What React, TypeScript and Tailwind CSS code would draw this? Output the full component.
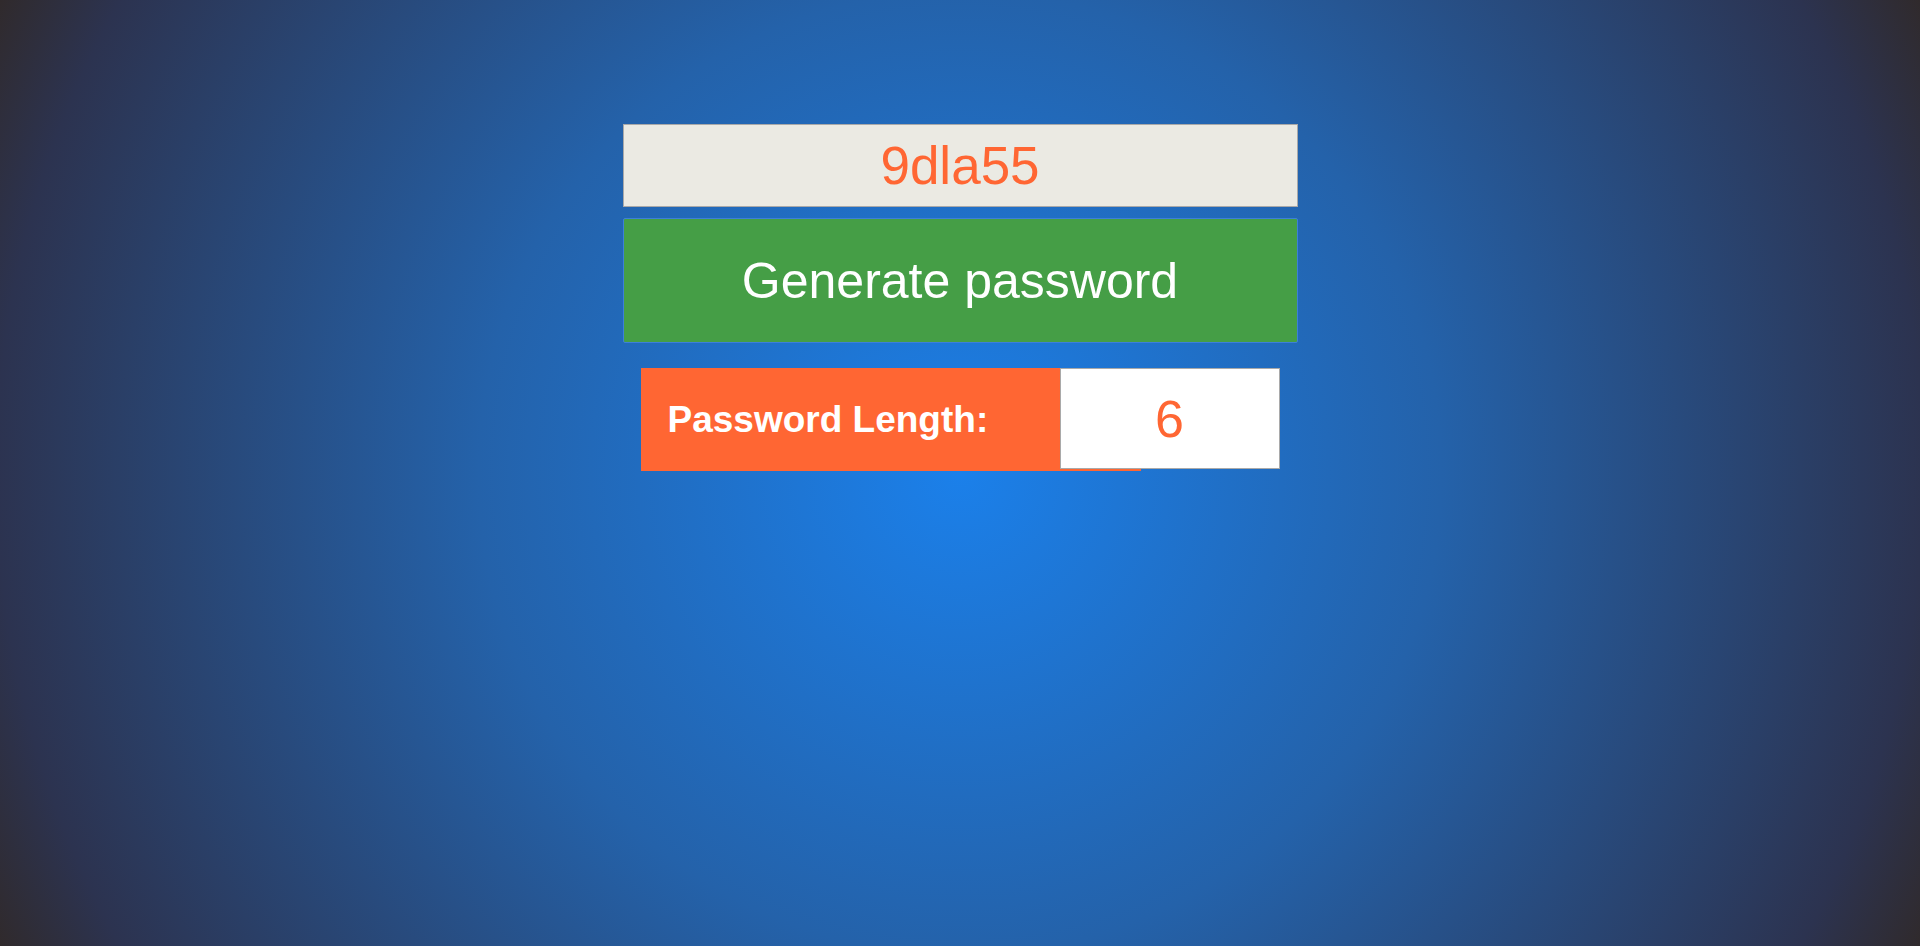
import React, { useState } from 'react';

const chars = 'abcdefghijklmnopqrstuvwxyz0123456789';

const App: React.FC = () => {
  const [length, setLength] = useState(6);
  const [password, setPassword] = useState('9dla55');

  const generate = () => {
    let out = '';
    for (let i = 0; i < length; i++) {
      out += chars[Math.floor(Math.random() * chars.length)];
    }
    setPassword(out);
  };

  return (
    <div
      className="min-h-screen w-full flex flex-col items-center pt-[124px] bg-[radial-gradient(circle,#1b80ea_0%,#2462aa_45%,#2c3350_90%,#302a2c_100%)]"
      style={{ fontFamily: '"Liberation Sans", Arial, sans-serif' }}
    >
      <div className="w-[675px] h-[83px] bg-[#ebeae3] border border-[#a9a9a9] flex items-center justify-center text-[#ff6633] text-[53px] leading-none">
        {password}
      </div>

      <button
        onClick={generate}
        className="mt-[11px] w-[675px] h-[125px] bg-[#459e46] border border-[#3d7fd9] rounded-[2px] text-white text-[50px] leading-none"
      >
        Generate password
      </button>

      <div className="mt-[25px] flex items-start">
        <div className="w-[500px] h-[103px] bg-[#ff6633] flex items-center pl-[27px] text-white font-bold text-[37px] leading-none">
          Password Length:
        </div>
        <input
          type="number"
          value={length}
          onChange={(e) => setLength(Number(e.target.value))}
          className="ml-[-81px] w-[220px] h-[101px] bg-white border border-[#a9a9a9] text-center text-[#ff6633] text-[52px] leading-none outline-none [appearance:textfield] [&::-webkit-inner-spin-button]:appearance-none [&::-webkit-outer-spin-button]:appearance-none"
        />
      </div>
    </div>
  );
};

export default App;
